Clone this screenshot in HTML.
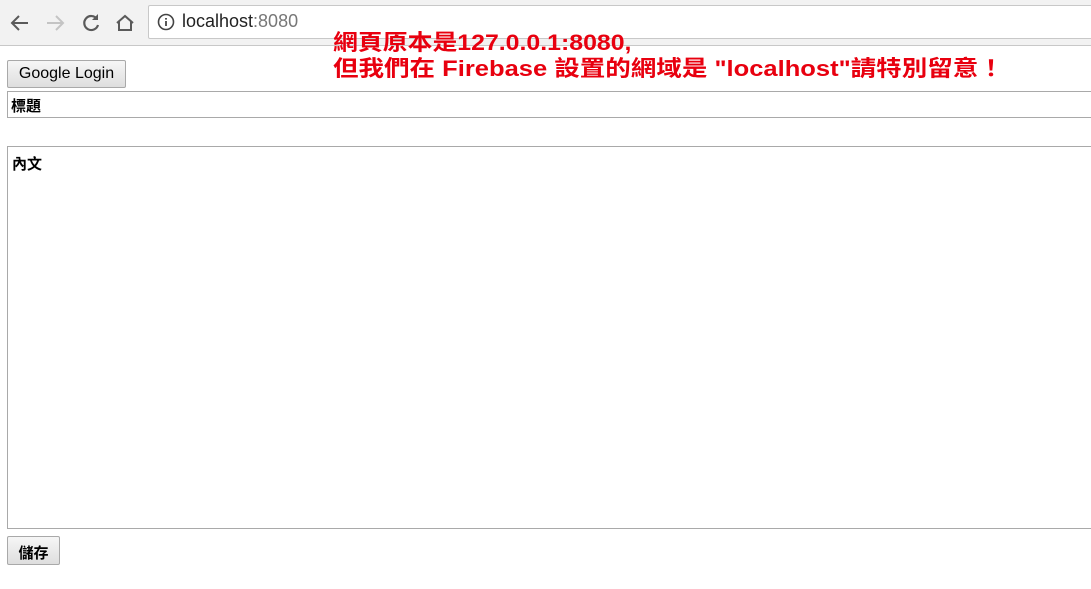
<!DOCTYPE html>
<html><head><meta charset="utf-8"><style>
body{margin:0;width:1091px;height:589px;overflow:hidden;background:#fff;font-family:"Liberation Sans","Noto Sans CJK TC",sans-serif;position:relative}
.bar{position:absolute;left:0;top:0;width:1091px;height:45px;background:#f2f2f2;border-bottom:1px solid #c8c8c8}
.url{position:absolute;left:148px;top:5px;width:960px;height:32px;background:#fff;border:1px solid #c8c8c8;border-radius:2px}
.url span{position:absolute;left:33px;top:5px;font-size:18px;color:#222}
.abs{position:absolute}
.btn{position:absolute;background:linear-gradient(#f6f6f6,#dedede);border:1px solid #a9a9a9;border-radius:2px;font-size:16px;color:#000;box-sizing:border-box}
.box{position:absolute;border:1px solid #a9a9a9;box-sizing:border-box;background:#fff}
.red{position:absolute;left:333px;color:#e8000f;font-weight:bold;font-size:22px;line-height:24px;font-family:"Liberation Sans Narrow","Liberation Sans","Noto Sans CJK TC",sans-serif;white-space:nowrap;transform-origin:0 0}
</style></head><body>
<div class="bar">
<svg class="abs" style="left:8px;top:11px" width="24" height="24" viewBox="0 0 24 24"><path d="M20 12H5M11 5l-7 7 7 7" fill="none" stroke="#5a5a5a" stroke-width="2"/></svg>
<svg class="abs" style="left:43px;top:11px" width="24" height="24" viewBox="0 0 24 24"><path d="M4 12h15M13 5l7 7-7 7" fill="none" stroke="#c4c4c4" stroke-width="2"/></svg>
<svg class="abs" style="left:79px;top:11px" width="24" height="24" viewBox="0 0 24 24"><path d="M18 8A7 7 0 1 0 19 14" fill="none" stroke="#5a5a5a" stroke-width="2.2"/><path d="M19 3v6h-6z" fill="#5a5a5a"/></svg>
<svg class="abs" style="left:113px;top:11px" width="24" height="24" viewBox="0 0 24 24"><path d="M4 12l8-7 8 7M6 10v9h12v-9" fill="none" stroke="#5a5a5a" stroke-width="2"/></svg>
<div class="url"><svg class="abs" style="left:8px;top:7px" width="18" height="18" viewBox="0 0 18 18"><circle cx="9" cy="9" r="7.5" fill="none" stroke="#444" stroke-width="1.6"/><path d="M9 8v5M9 5v1.6" stroke="#444" stroke-width="1.8"/></svg><span>localhost<span style="position:static;color:#777">:8080</span></span></div>
</div>
<div class="red" style="top:31px;transform:scaleX(1.13)">網頁原本是127.0.0.1:8080,</div>
<div class="red" style="top:57px;transform:scaleX(1.16)">但我們在 Firebase 設置的網域是 "localhost"請特別留意！</div>
<div class="btn" style="left:7px;top:60px;width:119px;height:28px;padding-top:4px;text-align:center">Google Login</div>
<div class="box" style="left:7px;top:91px;width:1100px;height:27px;font-size:15px;padding:3px 3px;font-weight:bold">標題</div>
<div class="box" style="left:7px;top:146px;width:1100px;height:383px;font-size:15px;padding:6px 4px;font-weight:bold">內文</div>
<div class="btn" style="left:7px;top:536px;width:53px;height:29px;padding-top:5px;text-align:center;font-weight:bold;font-size:15px">儲存</div>
</body></html>
